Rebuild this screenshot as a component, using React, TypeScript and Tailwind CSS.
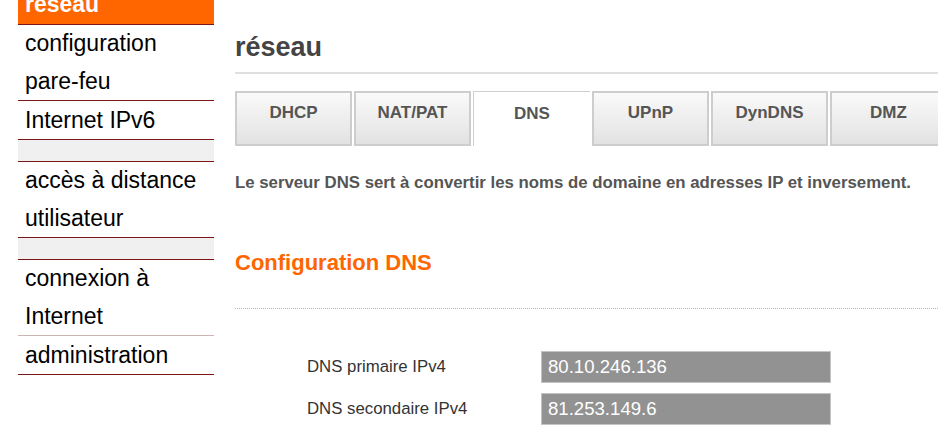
const menu = [
  { label: ["configuration", "pare-feu"], light: false },
  { label: ["Internet IPv6"], light: false },
  { label: null, light: false },
  { label: ["accès à distance", "utilisateur"], light: false },
  { label: null, light: false },
  { label: ["connexion à", "Internet"], light: true },
  { label: ["administration"], light: false },
];

const tabs = ["DHCP", "NAT/PAT", "DNS", "UPnP", "DynDNS", "DMZ"];

const dns = [
  { label: "DNS primaire IPv4", value: "80.10.246.136" },
  { label: "DNS secondaire IPv4", value: "81.253.149.6" },
];

function Sidebar() {
  return (
    <div className="w-[196px] ml-[18px] shrink-0 -mt-[12px]">
      <div className="h-[37px] bg-[#ff6600] border-b border-[#7a1616] text-white font-bold text-[23px] leading-[32px] px-[7px]">
        reseau
      </div>
      {menu.map((item, i) =>
        item.label ? (
          <div
            key={i}
            className={`px-[7px] text-[23px] text-black border-b ${
              item.label.length > 1 ? "leading-[37.5px]" : "leading-[38px]"
            } ${item.light ? "border-[#c9b3b3]" : "border-[#7a1616]"}`}
          >
            {item.label.map((l) => (
              <div key={l}>{l}</div>
            ))}
          </div>
        ) : (
          <div key={i} className="h-[22px] bg-[#f0f0f0] border-b border-[#7a1616]" />
        )
      )}
    </div>
  );
}

export default function App() {
  return (
    <div
      className="w-[938px] h-[437px] overflow-hidden bg-white flex"
      style={{ fontFamily: '"Liberation Sans", Arial, sans-serif' }}
    >
      <Sidebar />
      <div className="flex-1 ml-[21px] min-w-0">
        <h1 className="mt-[32px] text-[27px] leading-[31px] font-bold text-[#444]">réseau</h1>
        <div className="mt-[9px] h-[2px] bg-[#e0e0e0]" />
        <div className="mt-[17px] flex gap-[2px]">
          {tabs.map((t) =>
            t === "DNS" ? (
              <div
                key={t}
                className="w-[117px] shrink-0 h-[55px] bg-white border-l border-t border-[#cfcfcf] flex items-center justify-center pb-[10px] text-[17px] font-bold text-[#555]"
              >
                {t}
              </div>
            ) : (
              <div
                key={t}
                className="w-[117px] shrink-0 h-[55px] bg-gradient-to-b from-[#fafafa] to-[#e2e2e2] border-2 border-[#cdcdcd] flex items-center justify-center pb-[12px] text-[17px] font-bold text-[#555]"
              >
                {t}
              </div>
            )
          )}
        </div>
        <p className="mt-[26px] text-[16.8px] leading-[21px] font-bold text-[#555] whitespace-nowrap">
          Le serveur DNS sert à convertir les noms de domaine en adresses IP et inversement.
        </p>
        <h2 className="mt-[57px] text-[22px] leading-[26px] font-bold text-[#ff6600]">Configuration DNS</h2>
        <div className="mt-[32px] border-t border-dotted border-[#f7a46f]" />
        <div className="mt-[42px] flex flex-col gap-[10px]">
          {dns.map((d) => (
            <div key={d.label} className="flex items-center">
              <div className="ml-[72px] w-[234px] text-[16.8px] text-[#333]">{d.label}</div>
              <div className="w-[290px] h-[32px] bg-[#929292] border border-[#c4c4c4] text-white text-[18.6px] leading-[30px] px-[6px]">
                {d.value}
              </div>
            </div>
          ))}
        </div>
      </div>
    </div>
  );
}
